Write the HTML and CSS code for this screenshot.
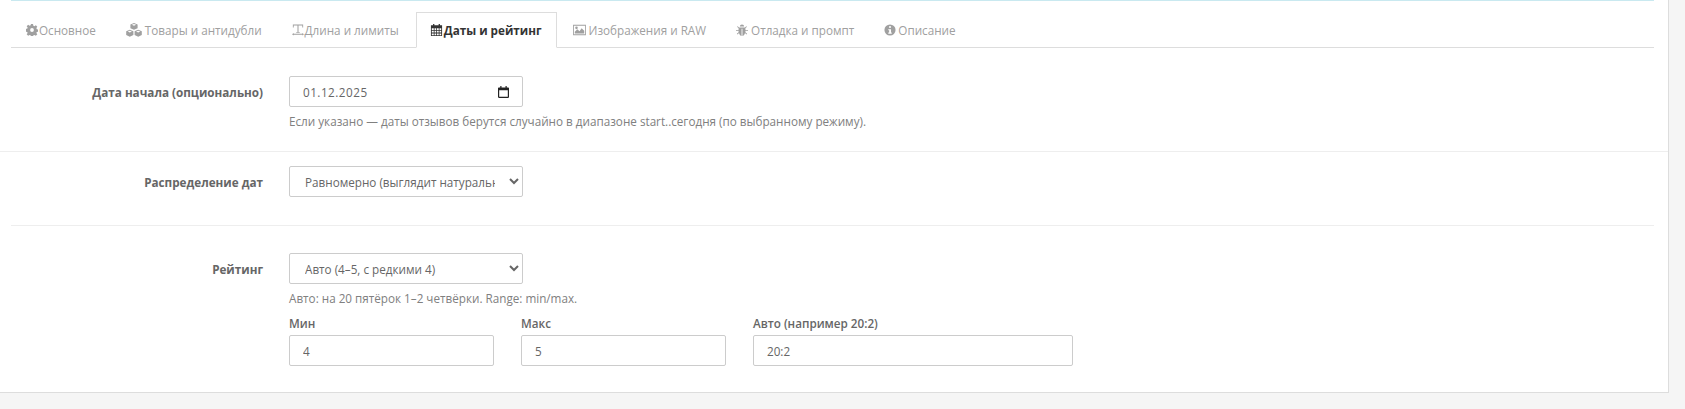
FILE: index.html
```html
<!DOCTYPE html>
<html lang="ru">

<head>
	<meta charset="UTF-8">
	<title>Даты и рейтинг</title>
	<link rel="stylesheet" href="styles.css">
</head>

<body>
	<div class="panel">
		<ul class="tabs">
			<li class="tab">
				<svg class="icon" viewBox="0 0 14 14"><path d="M5.800 0h2.400l.4 2 1.200.5 1.700-1.100 1.700 1.700-1.100 1.700.5 1.200 2 .4v2.400l-2 .4-.5 1.200 1.100 1.700-1.700 1.700-1.700-1.100-1.200.5-.4 2H5.800l-.4-2-1.200-.5-1.700 1.100-1.700-1.700 1.100-1.700-.5-1.200-2-.4V5.800l2-.4.5-1.200-1.100-1.700 1.700-1.700 1.700 1.100 1.200-.5zM7 4.800a2.200 2.200 0 1 0 0 4.400 2.200 2.200 0 0 0 0-4.400z" fill-rule="evenodd"/></svg>
				Основное
			</li>
			<li class="tab">
				<svg class="icon icon-16" viewBox="0 0 16 14"><path d="M8 0l3.600 1.400v3.800L8 6.800 4.400 5.200V1.400zM8 1L5.800 1.800 8 2.700l2.200-.9zM3.800 6.800l3.600 1.500V12l-3.600 1.800L.2 12V8.300zM3.800 7.800L1.700 8.600l2.100.9 2.100-.9zM12.200 6.800l3.600 1.500V12l-3.600 1.800L8.600 12V8.300zM12.200 7.800l-2.100.8 2.100.9 2.100-.9z" fill-rule="evenodd"/></svg>
				Товары и антидубли
			</li>
			<li class="tab">
				<svg class="icon" viewBox="0 0 14 14"><path d="M1 .5h12v3.500h-1V1.700H7.600v7.600H9v1H5v-1h1.400V1.700H2V4H1zM0 12l2-1.500v1h10v-1l2 1.500-2 1.500v-1H2v1z"/></svg>
				Длина и лимиты
			</li>
			<li class="tab active">
				<svg class="icon icon-13" viewBox="0 0 14 14"><path d="M3 0h1.500v1.500h5V0H11v1.500h2.500V14H.5V1.500H3zM1.500 5v2h2.300V5zm3.200 0v2h2V5zm2.900 0v2h2V5zm2.900 0v2h2V5zM1.500 8v2h2.300V8zm3.200 0v2h2V8zm2.900 0v2h2V8zm2.900 0v2h2V8zM1.500 11v2h2.300v-2zm3.200 0v2h2v-2zm2.900 0v2h2v-2zm2.900 0v2h2v-2z" fill-rule="evenodd"/></svg>
				Даты и рейтинг
			</li>
			<li class="tab">
				<svg class="icon icon-15" viewBox="0 0 15 14"><path d="M0 1h15v12H0zm1 1v10h13V2zm1 9V9l3-3 2.500 2.500L10 5l3 3v3zm2-8a1.500 1.500 0 1 1 0 3 1.500 1.500 0 0 1 0-3z" fill-rule="evenodd"/></svg>
				Изображения и RAW
			</li>
			<li class="tab">
				<svg class="icon icon-bug" viewBox="0 0 14 14"><path d="M4.500 3a2.500 2.500 0 0 1 5 0zM3.500 4h7l1.500-1.500.8.8L11 5v2h3v1h-3v1.500l2 2-.8.8-1.700-1.800C10 12.500 8.500 14 7.500 14V5.500h-1V14c-1 0-2.500-1.500-3-3.500l-1.700 1.800-.8-.8 2-2V8H0V7h3V5L1.200 3.300 2 2.500z"/></svg>
				Отладка и промпт
			</li>
			<li class="tab">
				<svg class="icon icon-info" viewBox="0 0 14 14"><path d="M7 .5a6.500 6.500 0 1 1 0 13 6.500 6.500 0 0 1 0-13zM5.800 2.500v2h2.400v-2zM5 6v1.300h1V10H5v1.500h4V10H8.200V6z" fill-rule="evenodd"/></svg>
				Описание
			</li>
		</ul>

		<div class="form-row row-date">
			<label class="form-label">Дата начала (опционально)</label>
			<div class="form-body">
				<div class="control date-control">
					<input class="date-value" type="text" value="01.12.2025">
					<svg class="date-icon" viewBox="0 0 12 13"><path d="M2.500 0h1.300v1.500h4.400V0h1.300v1.500h1.500c.5 0 1 .5 1 1V12c0 .5-.5 1-1 1H1c-.5 0-1-.5-1-1V2.500c0-.5.5-1 1-1h1.500zM1.300 4.500v7.200h9.400V4.500z" fill-rule="evenodd"/></svg>
				</div>
				<p class="help">Если указано — даты отзывов берутся случайно в диапазоне start..сегодня (по выбранному режиму).</p>
			</div>
		</div>

		<div class="form-row row-dist">
			<label class="form-label">Распределение дат</label>
			<div class="form-body">
				<select class="control">
					<option>Равномерно (выглядит натурально)</option>
				</select>
			</div>
		</div>

		<div class="form-row row-rating">
			<label class="form-label">Рейтинг</label>
			<div class="form-body">
				<select class="control">
					<option>Авто (4–5, с редкими 4)</option>
				</select>
				<p class="help">Авто: на 20 пятёрок 1–2 четвёрки. Range: min/max.</p>
				<div class="range-grid">
					<div>
						<label class="field-label">Мин</label>
						<input class="control" type="text" value="4">
					</div>
					<div>
						<label class="field-label">Макс</label>
						<input class="control" type="text" value="5">
					</div>
					<div>
						<label class="field-label">Авто (например 20:2)</label>
						<input class="control" type="text" value="20:2">
					</div>
				</div>
			</div>
		</div>
	</div>
</body>

</html>
```

FILE: styles.css
```css
body {
	background-color: #f5f5f5;
	color: #666;
	font-family: "Open Sans", sans-serif;
	font-size: 11.7px;
	margin: 0;
}

.panel {
	box-sizing: border-box;
	width: 1669px;
	height: 393px;
	padding: 0 14px 0 11px;
	background-color: #fff;
	border-right: 1px solid #ddd;
	border-bottom: 1px solid #ddd;
}

.tabs {
	display: flex;
	margin: 0;
	padding: 11px 0 0;
	list-style: none;
	border-top: 1px solid #c9e9f0;
	border-bottom: 1px solid #ddd;
}

.tab {
	display: flex;
	align-items: center;
	gap: 1px;
	box-sizing: border-box;
	height: 36px;
	padding: 0 15px;
	margin-bottom: -1px;
	color: #a0a0a0;
}

.tab.active {
	margin-left: 2px;
	padding: 0 14px 0 13px;
	color: #333;
	font-weight: 700;
	background-color: #fff;
	border: 1px solid #ddd;
	border-bottom-color: #fff;
}

.icon {
	width: 12px;
	height: 12px;
	fill: currentColor;
	flex: none;
}

.icon-13 {
	width: 13px;
}

.icon-15 {
	width: 15px;
	margin-right: 1px;
}

.icon-16 {
	width: 16px;
	height: 14px;
	margin-right: 2px;
}

.icon-bug {
	margin-right: 2px;
}

.icon-info {
	margin-right: 1px;
}

.form-row {
	display: flex;
}

.form-label {
	width: 252px;
	padding-top: 8px;
	text-align: right;
	font-weight: 700;
	flex: none;
}

.form-body {
	margin-left: 26px;
}

.row-date {
	margin: 0 -14px 0 -11px;
	padding: 28px 14px 21px 11px;
	border-bottom: 1px solid #eee;
}

.row-dist {
	padding: 14px 0 28px;
	border-bottom: 1px solid #eee;
}

.row-rating {
	padding-top: 27px;
}

.control {
	box-sizing: border-box;
	display: block;
	width: 234px;
	height: 31px;
	padding: 0 11px;
	color: #666;
	font-family: inherit;
	font-size: 11.7px;
	background-color: #fff;
	border: 1px solid #ccc;
	border-radius: 2px;
}

.date-control {
	display: flex;
	align-items: center;
	justify-content: space-between;
	padding: 0 13px 0 13px;
}

.date-value {
	width: 100px;
	padding: 0;
	color: #666;
	font-family: inherit;
	font-size: 11.7px;
	letter-spacing: .5px;
	border: 0;
}

.date-icon {
	width: 11px;
	height: 12px;
	fill: #222;
}

.help {
	margin: 6px 0 0;
	color: #808080;
	line-height: 17px;
}

.range-grid {
	display: grid;
	grid-template-columns: 205px 205px 320px;
	gap: 27px;
	margin-top: 8px;
}

.field-label {
	display: block;
	margin-bottom: 3px;
	line-height: 17px;
	font-weight: 600;
}

.range-grid .control {
	width: 100%;
	padding: 0 13px;
}
```
